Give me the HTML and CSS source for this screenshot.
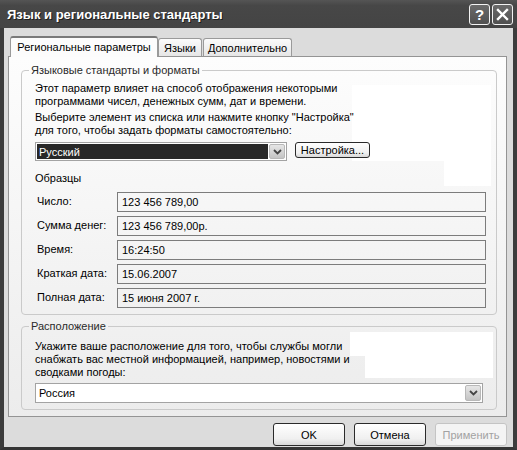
FILE: index.html
```html
<!DOCTYPE html>
<html lang="ru">
<head>
  <meta charset="UTF-8">
  <title>Язык и региональные стандарты</title>
  <link rel="stylesheet" href="styles.css">
</head>
<body>
  <div class="window">
    <div class="titlebar">
      <span class="title">Язык и региональные стандарты</span>
      <div class="caption">
        <span class="cap-btn help">?</span>
        <span class="cap-btn close">
          <svg width="13" height="13" viewBox="0 0 13 13"><path d="M2 2 L11 11 M11 2 L2 11" stroke="#fff" stroke-width="2.4" stroke-linecap="square"/></svg>
        </span>
      </div>
    </div>
    <div class="client">
      <div class="tabs">
        <span class="tab active">Региональные параметры</span>
        <span class="tab lang">Языки</span>
        <span class="tab extra">Дополнительно</span>
      </div>
      <div class="page">
        <fieldset class="group formats">
          <legend>Языковые стандарты и форматы</legend>
          <p>Этот параметр влияет на способ отображения некоторыми<br>программами чисел, денежных сумм, дат и времени.</p>
          <p>Выберите элемент из списка или нажмите кнопку "Настройка"<br>для того, чтобы задать форматы самостоятельно:</p>
          <div class="select-row">
            <div class="combo locale">
              <span class="combo-text">Русский</span>
              <span class="drop">
                <svg width="9" height="6" viewBox="0 0 9 6"><path d="M1 1 L4.5 4.5 L8 1" fill="none" stroke="#444" stroke-width="1.8"/></svg>
              </span>
            </div>
            <span class="btn setup">Настройка...</span>
          </div>
          <div class="samples-title">Образцы</div>
          <div class="samples">
            <div class="sample"><span class="label">Число:</span><span class="value">123 456 789,00</span></div>
            <div class="sample"><span class="label">Сумма денег:</span><span class="value">123 456 789,00р.</span></div>
            <div class="sample"><span class="label">Время:</span><span class="value">16:24:50</span></div>
            <div class="sample"><span class="label">Краткая дата:</span><span class="value">15.06.2007</span></div>
            <div class="sample"><span class="label">Полная дата:</span><span class="value">15 июня 2007 г.</span></div>
          </div>
        </fieldset>
        <fieldset class="group location">
          <legend>Расположение</legend>
          <p>Укажите ваше расположение для того, чтобы службы могли<br>снабжать вас местной информацией, например, новостями и<br>сводками погоды:</p>
          <div class="combo country">
            <span class="combo-text">Россия</span>
            <span class="drop">
              <svg width="9" height="6" viewBox="0 0 9 6"><path d="M1 1 L4.5 4.5 L8 1" fill="none" stroke="#444" stroke-width="1.8"/></svg>
            </span>
          </div>
        </fieldset>
        <!-- white blanks left over behind the text blocks -->
        <div class="blank b1"></div>
        <div class="blank b2"></div>
        <div class="blank b3"></div>
        <div class="blank b4"></div>
      </div>
      <div class="actions">
        <span class="btn">OK</span>
        <span class="btn">Отмена</span>
        <span class="btn disabled">Применить</span>
      </div>
    </div>
  </div>
</body>
</html>
```

FILE: styles.css
```css
*{
  margin: 0px;
  padding: 0px;
  box-sizing: border-box;
}
body{
  font-family: "Liberation Sans", Arial, sans-serif;
  font-size: 11px;
  color: #000000;
  background: #ffffff;
}
.window{
  width: 517px;
  height: 450px;
  display: flex;
  flex-direction: column;
}
.titlebar{
  height: 28px;
  background: linear-gradient(#555555, #474747 20%, #444444);
  display: flex;
  align-items: center;
  justify-content: space-between;
  padding: 0 4px 0 7px;
}
.title{
  color: #ffffff;
  font-weight: bold;
  font-size: 13px;
  text-shadow: 1px 1px 0 #1e1e1e;
}
.caption{
  display: flex;
  gap: 2px;
}
.cap-btn{
  width: 21px;
  height: 21px;
  border: 1px solid #f2f2f2;
  border-radius: 3px;
  background: linear-gradient(#6a6a6a, #505050);
  color: #ffffff;
  font-weight: bold;
  font-size: 15px;
  display: flex;
  align-items: center;
  justify-content: center;
}
.client{
  flex: 1;
  background: #dcdcdc;
  border-left: 4px solid #3c3c3c;
  border-right: 4px solid #3c3c3c;
  border-bottom: 3px solid #353535;
  padding: 8px 6px 0 4px;
}
.tabs{
  height: 20px;
  display: flex;
  align-items: flex-end;
  position: relative;
  z-index: 1;
}
.tab{
  height: 18px;
  border: 1px solid #9a9a9a;
  border-bottom: none;
  border-radius: 3px 3px 0 0;
  background: linear-gradient(#fbfbfb, #e6e6e6);
  display: flex;
  align-items: center;
  justify-content: center;
  padding-top: 1px;
}
.tab.active{
  width: 148px;
  height: 21px;
  margin-left: 2px;
  margin-bottom: -1px;
  background: #fcfcfc;
  border-top: 2px solid #7a7a7a;
  padding-top: 0;
  padding-bottom: 2px;
}
.tab.lang{
  width: 44px;
}
.tab.extra{
  width: 89px;
  margin-left: 1px;
}
.page{
  height: 361px;
  border: 1px solid #949494;
  background: linear-gradient(#fdfdfd, #ececec);
  padding: 7px 9px 0 12px;
  position: relative;
}
.group{
  border: 1px solid #cacaca;
  border-radius: 4px;
  position: relative;
  z-index: 1;
}
.group legend{
  margin-left: -6px;
  padding: 0 2px;
  line-height: 13px;
  color: #2a2a2a;
}
.group p{
  line-height: 13px;
}
.formats{
  padding: 5px 10px 6px 13px;
}
.formats p + p{
  margin-top: 3px;
}
.select-row{
  display: flex;
  align-items: flex-start;
  gap: 8px;
  margin-top: 5px;
}
.combo{
  height: 19px;
  border: 1px solid #a3a3a3;
  background: #ffffff;
  display: flex;
  align-items: center;
  padding: 1px;
}
.combo-text{
  flex: 1;
  height: 100%;
  display: flex;
  align-items: center;
  padding-left: 2px;
}
.locale{
  width: 252px;
}
.locale .combo-text{
  background: #282828;
  color: #ffffff;
  margin-right: 1px;
}
.drop{
  width: 16px;
  height: 100%;
  border: 1px solid #b8b8b8;
  border-radius: 2px;
  background: linear-gradient(#e6e6e6, #c4c4c4);
  display: flex;
  align-items: center;
  justify-content: center;
}
.btn{
  width: 72px;
  height: 23px;
  border: 1px solid #2a2a2a;
  border-radius: 3px;
  background: linear-gradient(#ffffff, #f0f0f0 70%, #d8d8d8);
  display: flex;
  align-items: center;
  justify-content: center;
}
.btn.setup{
  width: 75px;
  height: 16px;
}
.btn.disabled{
  border-color: #c4c4c4;
  color: #a2a2a2;
  background: #f4f4f4;
}
.samples-title{
  line-height: 13px;
  margin-top: 11px;
}
.samples{
  margin-top: 7px;
  display: flex;
  flex-direction: column;
  gap: 4px;
}
.sample{
  display: flex;
}
.sample .label{
  width: 82px;
  padding-left: 2px;
  line-height: 18px;
}
.sample .value{
  flex: 1;
  height: 20px;
  border: 1px solid #7c7c7c;
  line-height: 18px;
  padding-left: 4px;
}
.location{
  margin-top: 5px;
  padding: 7px 13px 6px 13px;
}
.country{
  height: 20px;
  margin-top: 4px;
}
.actions{
  display: flex;
  justify-content: flex-end;
  gap: 9px;
  margin-top: 6px;
}
.blank{
  position: absolute;
  background: #ffffff;
}
.b1{
  left: 343px;
  top: 28px;
  width: 139px;
  height: 76px;
}
.b2{
  left: 435px;
  top: 104px;
  width: 47px;
  height: 25px;
}
.b3{
  left: 341px;
  top: 275px;
  width: 143px;
  height: 24px;
}
.b4{
  left: 356px;
  top: 298px;
  width: 128px;
  height: 23px;
}
```
